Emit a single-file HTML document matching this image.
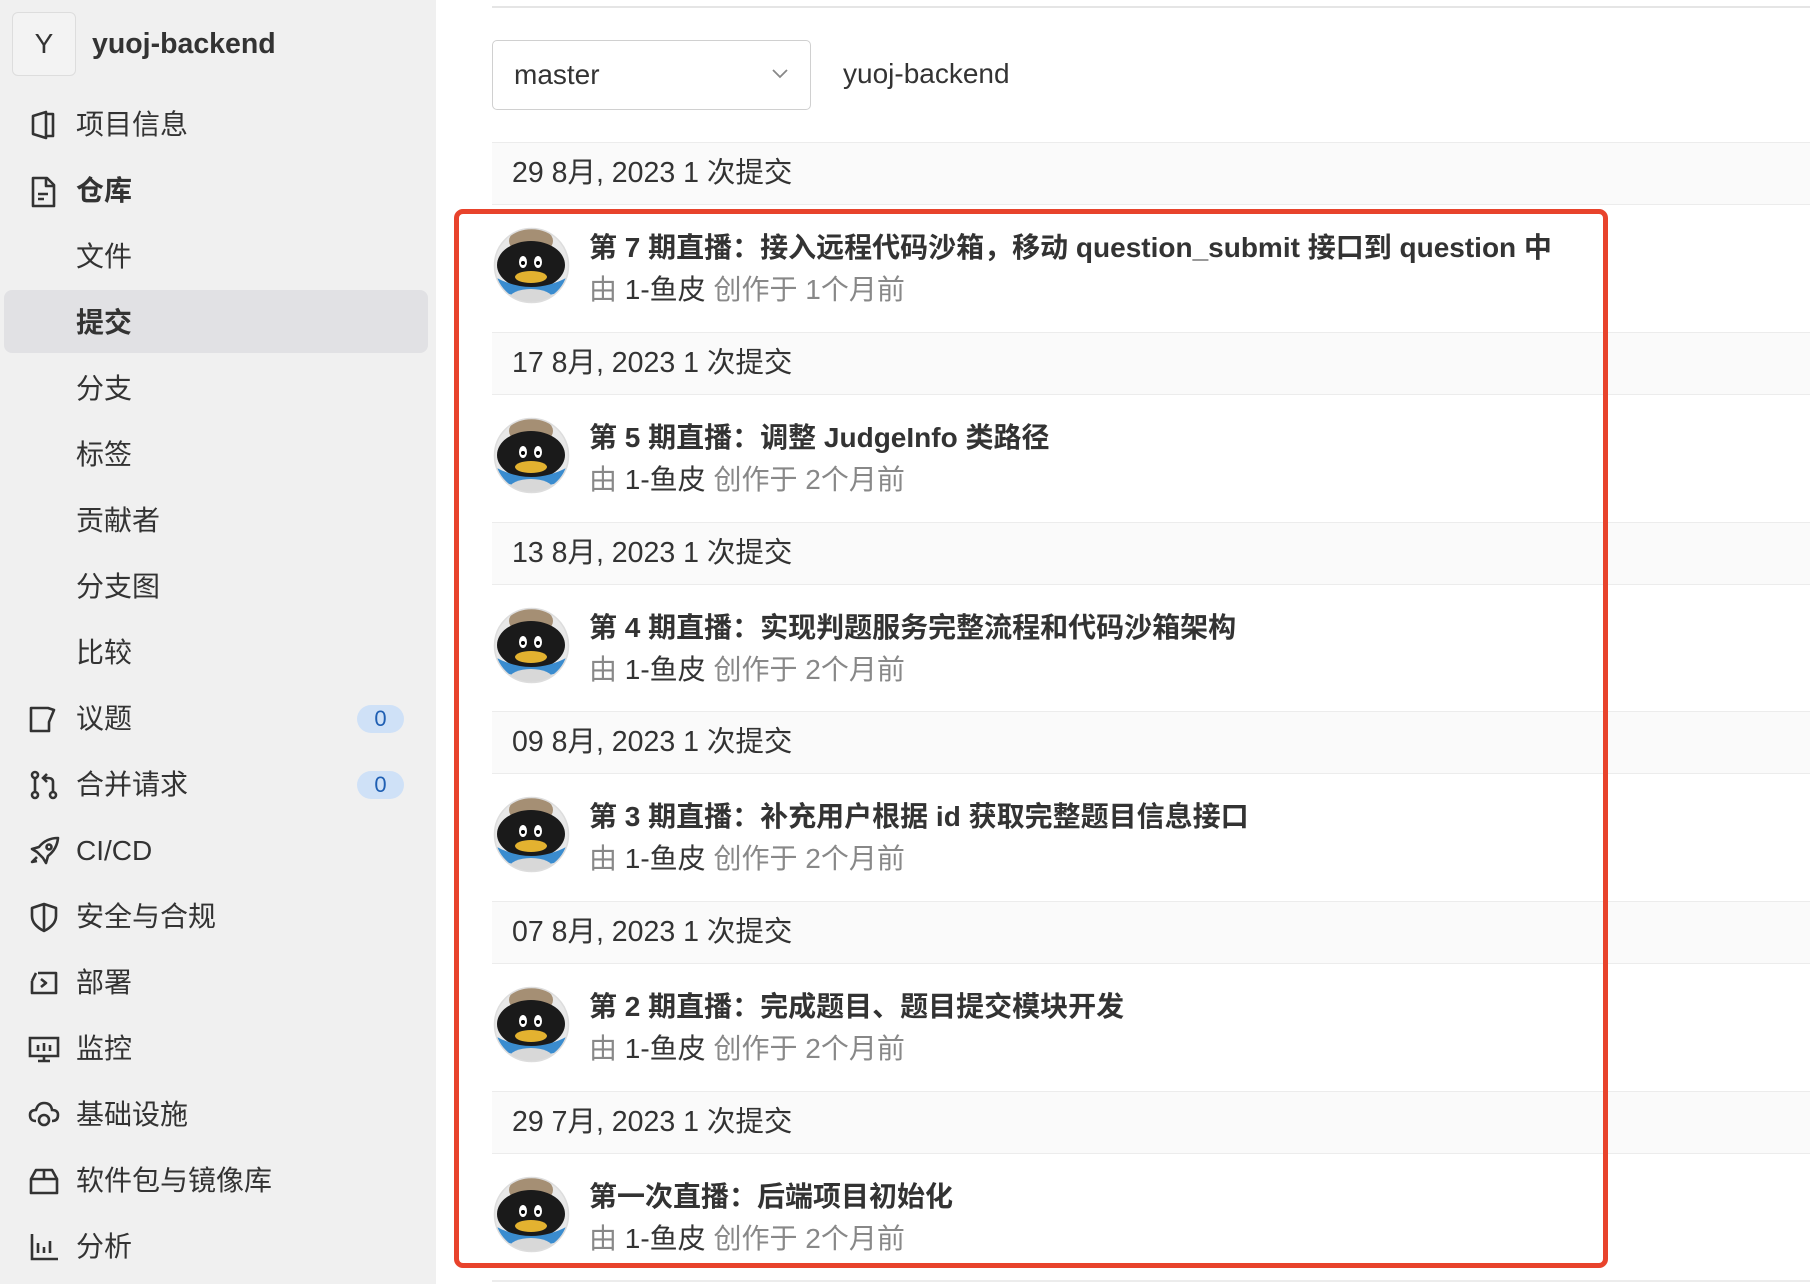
<!DOCTYPE html>
<html><head><meta charset="utf-8">
<style>
*{margin:0;padding:0;box-sizing:border-box}
body{width:1810px;height:1284px;overflow:hidden;background:#fff;font-family:"Liberation Sans","Noto Sans CJK SC",sans-serif;color:#333;position:relative}
.side{position:absolute;left:0;top:0;width:436px;height:1284px;background:#f0f0f0}
.ybox{position:absolute;left:12px;top:12px;width:64px;height:64px;border:1px solid #ddd;border-radius:6px;background:#f3f3f3;font-size:28px;text-align:center;line-height:62px;color:#333}
.pname{position:absolute;left:92px;top:28px;font-size:28.5px;font-weight:bold;color:#333}
.item{position:absolute;left:76px;font-size:28px;line-height:36px;height:36px;color:#333;margin-top:2px}
.ic{position:absolute;left:28px;width:32px;height:32px;margin-top:2px}
.hl{position:absolute;left:4px;top:290px;width:424px;height:63px;background:#e1e1e4;border-radius:8px}
.badge{position:absolute;left:357px;width:47px;height:28px;border-radius:14px;background:#cfe1f7;color:#1f5fb3;font-size:22px;text-align:center;line-height:28px;margin-top:2px}
.topline{position:absolute;left:492px;top:6px;right:0;height:2px;background:#e5e5e5}
.sel{position:absolute;left:492px;top:40px;width:319px;height:70px;border:1px solid #d0d0d0;border-radius:5px;font-size:28px;line-height:68px;padding-left:21px;color:#333}
.repo{position:absolute;left:843px;top:58px;font-size:28px;color:#333}
.hdr{position:absolute;left:492px;right:0;height:63px;background:#fafafa;border-top:1px solid #ececec;border-bottom:1px solid #ececec;font-size:28.5px;line-height:60px;padding-left:20px;color:#333}
.av{position:absolute;left:493px;width:77px;height:77px}
.t{position:absolute;left:589px;font-size:28px;font-weight:bold;color:#333;white-space:nowrap;margin-top:-4px}
.s{position:absolute;left:589px;font-size:28px;color:#888;white-space:nowrap;margin-top:-4px}
.s b{font-weight:normal;color:#333}
.red{position:absolute;left:454px;top:209px;width:1154px;height:1059px;border:5px solid #e8432c;border-radius:9px}
</style></head><body>
<div class="side">
<div class="ybox">Y</div><div class="pname">yuoj-backend</div>
<div class="hl"></div>
<svg class="ic" style="top:107px" viewBox="0 0 32 32" fill="none" stroke="#333" stroke-width="2.6" stroke-linejoin="round"><path d="M5 7 L18 3 V29 L5 25 Z M18 5 H25 V27 H18"/></svg>
<div class="item" style="top:105px">项目信息</div>
<svg class="ic" style="top:174px" viewBox="0 0 32 32" fill="none" stroke="#333" stroke-width="2.6" stroke-linejoin="round"><path d="M5 2 H19 L26 9 V30 H5 Z M18 2 V10 H26 M10 18 H20 M10 23 H16"/></svg>
<div class="item" style="top:171px;font-weight:bold">仓库</div>
<div class="item" style="top:237px">文件</div>
<div class="item" style="top:303px;font-weight:bold">提交</div>
<div class="item" style="top:369px">分支</div>
<div class="item" style="top:435px">标签</div>
<div class="item" style="top:501px">贡献者</div>
<div class="item" style="top:567px">分支图</div>
<div class="item" style="top:633px">比较</div>
<svg class="ic" style="top:701px" viewBox="0 0 32 32" fill="none" stroke="#333" stroke-width="2.6" stroke-linejoin="round"><path d="M3 5 H20 L26 7 L21 19 V28 H3 Z"/></svg>
<div class="item" style="top:699px">议题</div><div class="badge" style="top:703px">0</div>
<svg class="ic" style="top:767px" viewBox="0 0 32 32" fill="none" stroke="#333" stroke-width="2.6"><circle cx="7" cy="6" r="3"/><circle cx="7" cy="26" r="3"/><circle cx="25" cy="26" r="3"/><path d="M7 9 V23 M25 23 V13 Q25 9 20 9 H16 M19 5 L15 9 L19 13"/></svg>
<div class="item" style="top:765px">合并请求</div><div class="badge" style="top:769px">0</div>
<svg class="ic" style="top:833px" viewBox="0 0 32 32" fill="none" stroke="#333" stroke-width="2.6" stroke-linejoin="round"><path d="M30 3 Q18 3 11 12 L4 14 L9 17 L15 23 L18 28 L20 21 Q29 14 30 3 Z M9 22 L4 27 L9 26"/><circle cx="21" cy="12" r="2.5"/></svg>
<div class="item" style="top:831px">CI/CD</div>
<svg class="ic" style="top:899px" viewBox="0 0 32 32" fill="none" stroke="#333" stroke-width="2.6" stroke-linejoin="round"><path d="M16 3 L28 7 V15 Q28 24 16 30 Q4 24 4 15 V7 Z M16 3 V30"/></svg>
<div class="item" style="top:897px">安全与合规</div>
<svg class="ic" style="top:965px" viewBox="0 0 32 32" fill="none" stroke="#333" stroke-width="2.6" stroke-linejoin="round"><path d="M10 6 H28 V26 H10 M4 14 V26 H10 M4 14 L8 6 M13 12 L18 16 L13 20"/></svg>
<div class="item" style="top:963px">部署</div>
<svg class="ic" style="top:1031px" viewBox="0 0 32 32" fill="none" stroke="#333" stroke-width="2.6"><path d="M2 5 H30 V23 H2 Z M10 28 H22 M16 23 V28 M10 12 V18 M16 10 V18 M22 12 V18"/></svg>
<div class="item" style="top:1029px">监控</div>
<svg class="ic" style="top:1097px" viewBox="0 0 32 32" fill="none" stroke="#333" stroke-width="2.6"><path d="M8 22 Q2 22 2 16 Q2 11 8 11 Q10 4 16 4 Q23 4 24 11 Q30 11 30 16 Q30 22 24 22"/><circle cx="16" cy="21" r="5"/></svg>
<div class="item" style="top:1095px">基础设施</div>
<svg class="ic" style="top:1163px" viewBox="0 0 32 32" fill="none" stroke="#333" stroke-width="2.6" stroke-linejoin="round"><path d="M3 14 L8 5 H24 L29 14 V28 H3 Z M3 14 H29 M16 5 V14"/></svg>
<div class="item" style="top:1161px">软件包与镜像库</div>
<svg class="ic" style="top:1229px" viewBox="0 0 32 32" fill="none" stroke="#333" stroke-width="2.6"><path d="M4 3 V28 H30 M10 12 V22 M16 16 V22 M22 10 V22"/></svg>
<div class="item" style="top:1227px">分析</div>
</div>

<div class="topline"></div>
<div class="sel">master<svg style="position:absolute;right:22px;top:28px" width="16" height="10" viewBox="0 0 16 10" fill="none" stroke="#888" stroke-width="1.8"><path d="M1 1 L8 8 L15 1"/></svg></div>
<div class="repo">yuoj-backend</div>

<svg width="0" height="0" style="position:absolute"><defs><symbol id="pg" viewBox="0 0 77 77">
<clipPath id="cc"><circle cx="38.5" cy="38.5" r="37"/></clipPath>
<g clip-path="url(#cc)"><rect width="77" height="77" fill="#e8e8e8"/><ellipse cx="38" cy="14" rx="22" ry="14" fill="#a58f74"/><ellipse cx="38" cy="38" rx="34" ry="24" fill="#1a1a1a"/><ellipse cx="30" cy="35" rx="4" ry="6" fill="#fff"/><ellipse cx="45" cy="35" rx="4" ry="6" fill="#fff"/><circle cx="30" cy="36" r="2" fill="#000"/><circle cx="45" cy="36" r="2" fill="#000"/><path d="M2 50 Q38 70 75 50 L75 62 Q38 78 2 62 Z" fill="#3a8ccf"/><ellipse cx="38" cy="50" rx="16" ry="6" fill="#e3b230"/><ellipse cx="38" cy="72" rx="22" ry="10" fill="#d8d8d8"/></g>
<circle cx="38.5" cy="38.5" r="37" fill="none" stroke="#ddd" stroke-width="1.5"/></symbol></defs></svg>

<div class="hdr" style="top:142px">29 8月, 2023 1 次提交</div>
<svg class="av" style="top:227px"><use href="#pg"/></svg>
<div class="t" style="top:230px">第 7 期直播：接入远程代码沙箱，移动 question_submit 接口到 question 中</div>
<div class="s" style="top:272px">由 <b>1-鱼皮</b> 创作于 1个月前</div>

<div class="hdr" style="top:332px">17 8月, 2023 1 次提交</div>
<svg class="av" style="top:417px"><use href="#pg"/></svg>
<div class="t" style="top:420px">第 5 期直播：调整 JudgeInfo 类路径</div>
<div class="s" style="top:462px">由 <b>1-鱼皮</b> 创作于 2个月前</div>

<div class="hdr" style="top:522px">13 8月, 2023 1 次提交</div>
<svg class="av" style="top:607px"><use href="#pg"/></svg>
<div class="t" style="top:610px">第 4 期直播：实现判题服务完整流程和代码沙箱架构</div>
<div class="s" style="top:652px">由 <b>1-鱼皮</b> 创作于 2个月前</div>

<div class="hdr" style="top:711px">09 8月, 2023 1 次提交</div>
<svg class="av" style="top:796px"><use href="#pg"/></svg>
<div class="t" style="top:799px">第 3 期直播：补充用户根据 id 获取完整题目信息接口</div>
<div class="s" style="top:841px">由 <b>1-鱼皮</b> 创作于 2个月前</div>

<div class="hdr" style="top:901px">07 8月, 2023 1 次提交</div>
<svg class="av" style="top:986px"><use href="#pg"/></svg>
<div class="t" style="top:989px">第 2 期直播：完成题目、题目提交模块开发</div>
<div class="s" style="top:1031px">由 <b>1-鱼皮</b> 创作于 2个月前</div>

<div class="hdr" style="top:1091px">29 7月, 2023 1 次提交</div>
<svg class="av" style="top:1176px"><use href="#pg"/></svg>
<div class="t" style="top:1179px">第一次直播：后端项目初始化</div>
<div class="s" style="top:1221px">由 <b>1-鱼皮</b> 创作于 2个月前</div>
<div style="position:absolute;left:492px;right:0;top:1280px;height:2px;background:#ececec"></div>

<div class="red"></div>
</body></html>
